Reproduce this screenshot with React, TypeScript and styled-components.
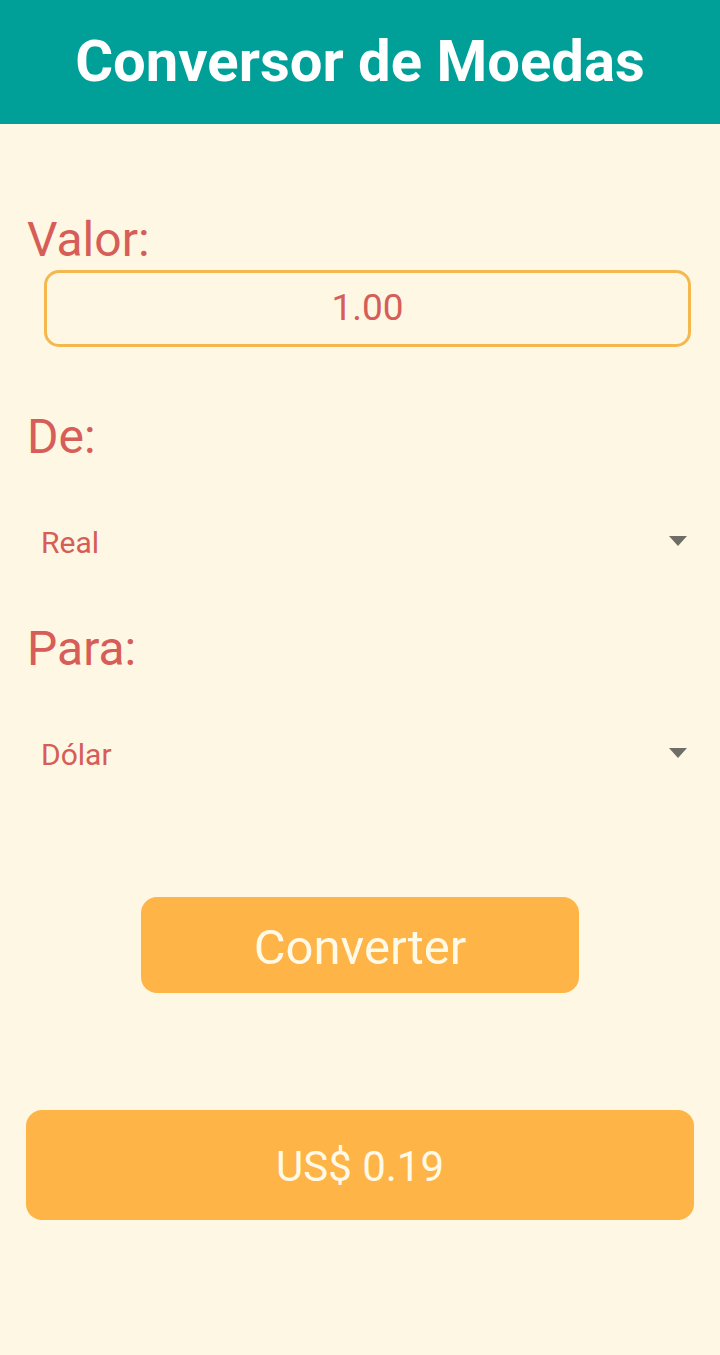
import React from "react";
import styled, { createGlobalStyle } from "styled-components";

const GlobalStyle = createGlobalStyle`
  html, body {
    margin: 0;
    padding: 0;
    background: #fef7e3;
  }
  * { box-sizing: border-box; }
`;

const Screen = styled.div`
  width: 720px;
  min-height: 1355px;
  background: #fef7e3;
  font-family: Roboto, "Noto Sans", Arial, sans-serif;
  display: flex;
  flex-direction: column;
`;

const Header = styled.header`
  height: 124px;
  background: #00a098;
  display: flex;
  align-items: center;
  justify-content: center;
`;

const Title = styled.h1`
  margin: 0;
  padding-bottom: 2px;
  font-size: 58px;
  font-weight: 700;
  color: #ffffff;
  line-height: 1;
`;

const Content = styled.main`
  display: flex;
  flex-direction: column;
  padding: 0 26px 0 26px;
`;

const Label = styled.div<{ $top: number }>`
  margin-top: ${(p) => p.$top}px;
  margin-left: 1px;
  font-size: 48px;
  line-height: 56px;
  color: #d65d58;
`;

const ValueInput = styled.input`
  margin: 2px 3px 0 18px;
  height: 77px;
  border: 3px solid #f4b84f;
  border-radius: 15px;
  background: transparent;
  text-align: center;
  font-family: Roboto, "Noto Sans", Arial, sans-serif;
  font-size: 37px;
  color: #d65d58;
  outline: none;
  padding: 0 0 2px;
`;

const Picker = styled.div`
  margin-top: 26px;
  height: 100px;
  display: flex;
  align-items: center;
  justify-content: space-between;
  padding: 0 7px 0 15px;
`;

const PickerText = styled.span`
  font-size: 30px;
  color: #d65d58;
  line-height: 35px;
  padding-top: 3px;
`;

const Arrow = styled.svg`
  width: 18px;
  height: 10px;
  display: block;
`;

const ConvertButton = styled.button`
  align-self: center;
  margin-top: 94px;
  width: 438px;
  height: 96px;
  border: none;
  border-radius: 16px;
  background: #feb446;
  color: #fff9e8;
  font-family: Roboto, "Noto Sans", Arial, sans-serif;
  font-size: 49px;
  cursor: pointer;
  padding: 4px 0 0;
`;

const Result = styled.div`
  margin-top: 117px;
  height: 110px;
  border-radius: 16px;
  background: #feb446;
  display: flex;
  align-items: center;
  justify-content: center;
  color: #fff9e8;
  font-size: 42px;
  padding-top: 2px;
`;

const Dropdown = ({ value }: { value: string }) => (
  <Picker>
    <PickerText>{value}</PickerText>
    <Arrow viewBox="0 0 18 10">
      <polygon points="0,0 18,0 9,10" fill="#6e6e66" />
    </Arrow>
  </Picker>
);

export default function App() {
  return (
    <>
      <GlobalStyle />
      <Screen>
        <Header>
          <Title>Conversor de Moedas</Title>
        </Header>
        <Content>
          <Label $top={88}>Valor:</Label>
          <ValueInput defaultValue="1.00" />
          <Label $top={62}>De:</Label>
          <Dropdown value="Real" />
          <Label $top={30}>Para:</Label>
          <Dropdown value="Dólar" />
          <ConvertButton>Converter</ConvertButton>
          <Result>US$ 0.19</Result>
        </Content>
      </Screen>
    </>
  );
}
